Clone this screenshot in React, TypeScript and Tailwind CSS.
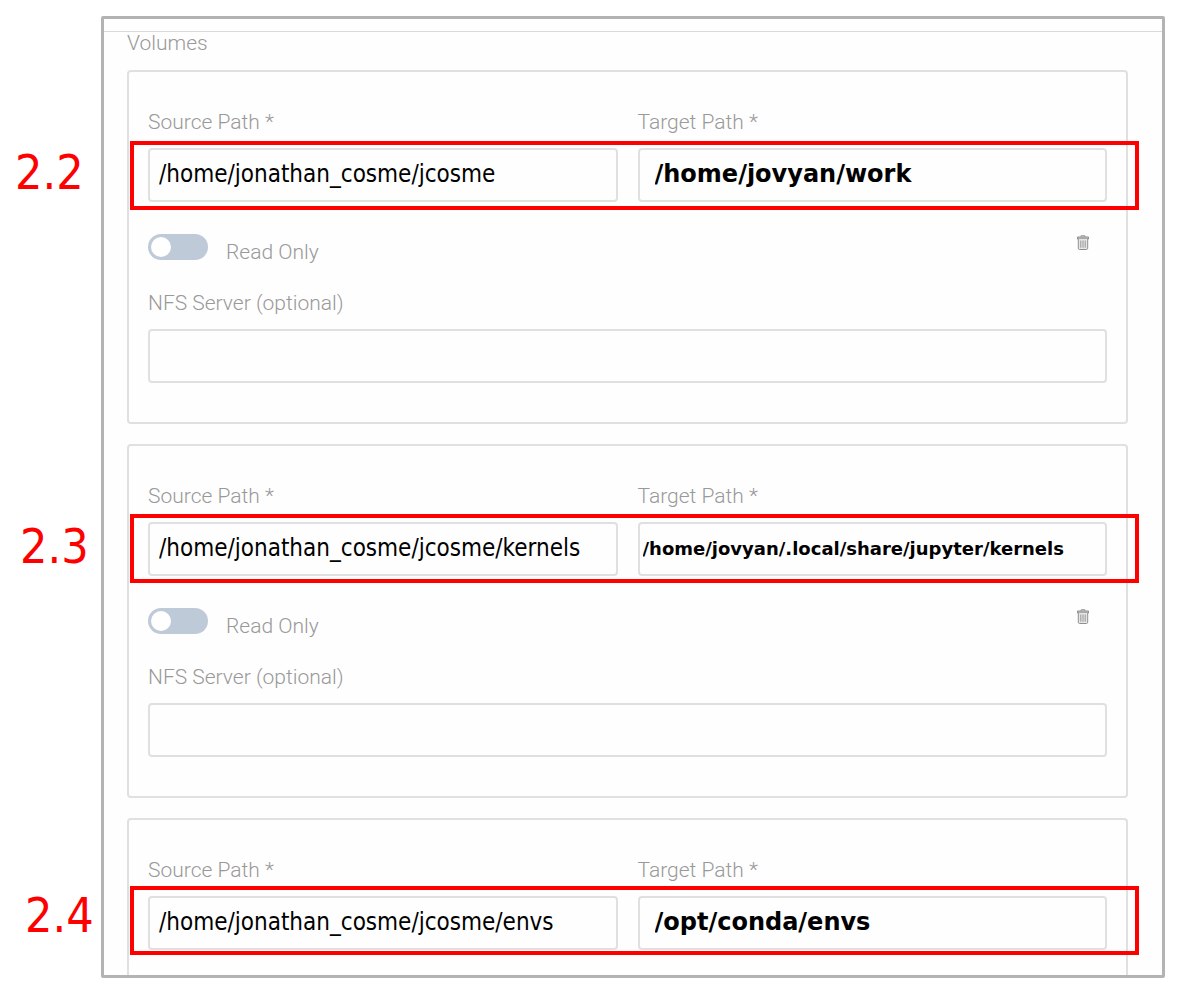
import { useId } from 'react';

type Volume = {
  source: string;
  target: string;
  targetClass: string;
  collapsed?: boolean;
};

const volumes: Volume[] = [
  {
    source: '/home/jonathan_cosme/jcosme',
    target: '/home/jovyan/work',
    targetClass: 'pl-[15px] text-2xl',
  },
  {
    source: '/home/jonathan_cosme/jcosme/kernels',
    target: '/home/jovyan/.local/share/jupyter/kernels',
    targetClass: 'pl-[3px] text-lg',
  },
  {
    source: '/home/jonathan_cosme/jcosme/envs',
    target: '/opt/conda/envs',
    targetClass: 'pl-[15px] text-2xl',
    collapsed: true,
  },
];

// Step markers drawn over the form: the number and its red outline.
const steps = [
  { label: '2.2', labelPlace: 'left-[15px] top-[144px]', boxPlace: 'top-[141px]' },
  { label: '2.3', labelPlace: 'left-[20px] top-[518px]', boxPlace: 'top-[514px]' },
  { label: '2.4', labelPlace: 'left-[25px] top-[887px]', boxPlace: 'top-[886px]' },
];

const labelClass = 'block text-[21px] leading-[28px] font-light text-[#999999]';
const inputClass =
  'mt-3 block h-[54px] w-full rounded-[4px] border-2 border-[#e0e0e0] bg-transparent pb-0.5 text-black outline-none';

function TrashIcon() {
  return (
    <svg width="12" height="15" viewBox="0 0 12 15" fill="none" stroke="#8f8f8f" aria-hidden="true">
      <path d="M4 1.8V.8h4v1" />
      <path d="M.5 2h11v2H.5z" fill="#c4c4c4" />
      <path d="M1.3 4v9.2c0 .8.5 1.3 1.2 1.3h7c.7 0 1.2-.5 1.2-1.3V4" fill="#e6e6e6" />
      <path d="M3.8 5.5v7.2M6 5.5v7.2M8.2 5.5v7.2" strokeWidth="0.9" />
    </svg>
  );
}

function VolumeCard({ volume }: { volume: Volume }) {
  const id = useId();
  return (
    <div
      className={`border-2 border-[#e0e0e0] px-[19px] pt-9 ${
        volume.collapsed ? 'flex-1 rounded-t-[4px] border-b-0' : 'shrink-0 rounded-[4px] pb-[39px]'
      }`}
    >
      <div className="grid grid-cols-2 gap-5">
        <div>
          <label htmlFor={`${id}-source`} className={labelClass}>
            Source Path *
          </label>
          <input
            id={`${id}-source`}
            type="text"
            defaultValue={volume.source}
            className={`${inputClass} pl-[9px] font-['DejaVu_Sans_Condensed','DejaVu_Sans',sans-serif] text-2xl`}
          />
        </div>
        <div>
          <label htmlFor={`${id}-target`} className={labelClass}>
            Target Path *
          </label>
          <input
            id={`${id}-target`}
            type="text"
            defaultValue={volume.target}
            className={`${inputClass} font-['DejaVu_Sans',sans-serif] font-bold ${volume.targetClass}`}
          />
        </div>
      </div>

      {!volume.collapsed && (
        <>
          <div className="mt-8 flex items-start justify-between">
            <label className="flex items-start gap-[18px]">
              <input
                type="checkbox"
                role="switch"
                className="h-[26px] w-[60px] appearance-none rounded-full bg-[#bfcad8] p-[3px] before:block before:size-5 before:rounded-full before:bg-white checked:before:ml-auto"
              />
              <span className={`${labelClass} mt-1`}>Read Only</span>
            </label>
            <button type="button" aria-label="Delete volume" className="mt-px mr-[18px]">
              <TrashIcon />
            </button>
          </div>

          <div className="mt-[23px]">
            <label htmlFor={`${id}-nfs`} className={labelClass}>
              NFS Server (optional)
            </label>
            <input
              id={`${id}-nfs`}
              type="text"
              className={`${inputClass} pl-[9px] font-['DejaVu_Sans_Condensed','DejaVu_Sans',sans-serif] text-2xl`}
            />
          </div>
        </>
      )}
    </div>
  );
}

export default function App() {
  return (
    <main className="relative flex h-screen flex-col overflow-hidden bg-white pt-4 pr-5 pb-[17px] pl-[101px] font-[Roboto,sans-serif]">
      <section className="flex min-h-0 flex-1 flex-col overflow-hidden rounded-[2px] border-3 border-[#b3b3b3] bg-[#fefefe]">
        <div className="h-[13px] shrink-0 border-b border-[#d9d9d9]" />
        <div className="flex min-h-0 flex-1 flex-col overflow-hidden pr-[34px] pl-[23px]">
          <h2 className="shrink-0 text-[21px] leading-[22px] font-light text-[#999999]">Volumes</h2>
          <div className="mt-4 flex min-h-0 flex-1 flex-col gap-5">
            {volumes.map((volume) => (
              <VolumeCard key={volume.source} volume={volume} />
            ))}
          </div>
        </div>
      </section>

      {steps.map((step) => (
        <div key={step.label}>
          <span
            className={`absolute font-['DejaVu_Sans_Condensed','DejaVu_Sans',sans-serif] text-5xl leading-[56px] text-[#ff0000] ${step.labelPlace}`}
          >
            {step.label}
          </span>
          <div
            className={`pointer-events-none absolute right-[46px] left-[130px] h-[69px] border-4 border-[#ff0000] ${step.boxPlace}`}
          />
        </div>
      ))}
    </main>
  );
}
